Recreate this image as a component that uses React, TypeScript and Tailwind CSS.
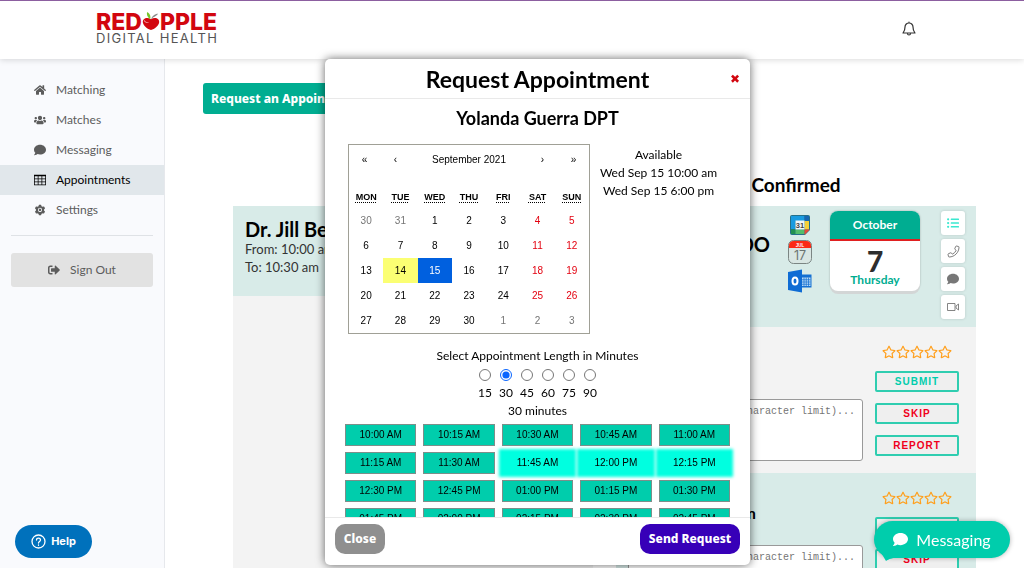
import type { ReactNode } from "react";
import { FaComment, FaHome, FaListUl, FaPhone, FaRegStar, FaSignOutAlt, FaUsers } from "react-icons/fa";
import { AiFillSetting } from "react-icons/ai";
import { ImTable2 } from "react-icons/im";
import { clsx } from "clsx";

const navItems = [
  { label: "Matching", icon: <FaHome /> },
  { label: "Matches", icon: <FaUsers /> },
  { label: "Messaging", icon: <FaComment /> },
  { label: "Appointments", icon: <ImTable2 />, active: true },
  { label: "Settings", icon: <AiFillSetting className="size-[14px]" /> },
];

const weekdays = ["MON", "TUE", "WED", "THU", "FRI", "SAT", "SUN"];

const weeks = [
  [30, 31, 1, 2, 3, 4, 5],
  [6, 7, 8, 9, 10, 11, 12],
  [13, 14, 15, 16, 17, 18, 19],
  [20, 21, 22, 23, 24, 25, 26],
  [27, 28, 29, 30, 1, 2, 3],
];

const lengths = [15, 30, 45, 60, 75, 90];

const slots = [
  "10:00 AM", "10:15 AM", "10:30 AM", "10:45 AM", "11:00 AM",
  "11:15 AM", "11:30 AM", "11:45 AM", "12:00 PM", "12:15 PM",
  "12:30 PM", "12:45 PM", "01:00 PM", "01:15 PM", "01:30 PM",
  "01:45 PM", "02:00 PM", "02:15 PM", "02:30 PM", "02:45 PM",
];
const selectedSlots = ["11:45 AM", "12:00 PM", "12:15 PM"];

function Logo() {
  return (
    <a href="#" className="block w-[124px] font-['Inter']">
      <span className="flex items-end text-[23px] leading-[19px] font-extrabold text-[#d2060f]">
        RED
        <svg viewBox="0 0 20 22" className="mb-px h-[20px] w-[18px] shrink-0">
          <path d="M10 9C6 6 0 8 1 13c1 4 5 7 9 8 4-1 8-4 9-8 1-5-5-7-9-4z" fill="#d2060f" />
          <path d="M2 9c1 3 4 4 6 3-2 2-6 1-6-3z" fill="#fff" opacity=".8" />
          <path d="M9 9C5 6 5 2 6 1c3 2 4 5 3 8z" fill="#77c52c" />
          <path d="M10 9c1-3 4-6 8-6-2 3-5 3-8 6z" fill="#8a8a8a" />
        </svg>
        PPLE
      </span>
      <span className="block text-[13px] leading-[13px] tracking-widest whitespace-nowrap text-[#555]">DIGITAL HEALTH</span>
    </a>
  );
}

function BellIcon() {
  return (
    <svg viewBox="0 0 28 30" className="h-[15px] w-[14px]" fill="none" stroke="#333" strokeWidth="2.400" strokeLinejoin="round" strokeLinecap="round">
      <path d="M14 2v2M14 4c-5 0-8 4-8 8 0 7-2 9-4 12h24c-2-3-4-5-4-12 0-4-3-8-8-8z" />
      <path d="M11 25c0 4 6 4 6 0" />
    </svg>
  );
}

function Header() {
  return (
    <header className="relative z-10 flex h-[59px] shrink-0 items-center justify-between border-t border-[#8c5fa0] bg-white pr-[108px] pb-1 pl-[96px] shadow-[0_1px_6px_rgba(0,0,0,0.15)]">
      <Logo />
      <button type="button" aria-label="Notifications">
        <BellIcon />
      </button>
    </header>
  );
}

function Sidebar() {
  return (
    <aside className="w-[165px] shrink-0 border-r border-[#e6e8ec] bg-[#f9fafd] pt-4 text-[12px] text-[#5c5c5c]">
      <nav>
        {navItems.map((item) => (
          <a
            key={item.label}
            href="#"
            className={clsx("flex h-[30px] items-center gap-[10px] pl-[34px]", item.active && "bg-[#e1e7eb] text-black")}
          >
            <span className="flex w-3 justify-center text-[12px]">{item.icon}</span>
            {item.label}
          </a>
        ))}
      </nav>
      <div className="mx-[11px] mt-[10px] border-t border-[#dfe2e6] pt-[17px]">
        <button type="button" className="flex h-[34px] w-full items-center justify-center gap-[10px] rounded-[3px] bg-[#e2e2e2]">
          <FaSignOutAlt className="text-[12px]" />
          Sign Out
        </button>
      </div>
    </aside>
  );
}

function GoogleCalendarIcon() {
  return (
    <svg viewBox="0 0 40 40" className="size-5">
      <rect width="40" height="40" rx="4" fill="#24708a" />
      <rect x="2" y="2" width="27" height="10" fill="#1a9be0" />
      <rect x="29" y="2" width="9" height="10" fill="#1767b2" />
      <rect x="2" y="12" width="9" height="16" fill="#1a9be0" />
      <rect x="29" y="12" width="9" height="17" fill="#f7d038" />
      <rect x="2" y="29" width="9" height="9" fill="#219150" />
      <rect x="11" y="29" width="18" height="9" fill="#54bd6b" />
      <path d="M29 29h11L29 40z" fill="#e5493a" />
      <path d="M40 30v10H30z" fill="#d7ebe7" />
      <rect x="11" y="11" width="18" height="18" fill="#f4f7f8" />
      <text x="20" y="26" textAnchor="middle" fontSize="15" fontWeight="700" fontFamily="Liberation Sans" fill="#444">31</text>
    </svg>
  );
}

function AppleCalendarIcon() {
  return (
    <svg viewBox="0 0 48 48" className="size-6">
      <rect x="1" y="1" width="46" height="46" rx="10" fill="#d9e6e3" stroke="#7b8583" strokeWidth="2" />
      <path d="M2 16v-5c0-6 4-9 9-9h26c5 0 9 3 9 9v5z" fill="#fb2a15" />
      <text x="24" y="13" textAnchor="middle" fontSize="9" fontWeight="700" fontFamily="Liberation Sans" fill="#fff">JUL</text>
      <text x="24" y="40" textAnchor="middle" fontSize="25" fontFamily="Inter" fill="#6b7472">17</text>
    </svg>
  );
}

function OutlookIcon() {
  return (
    <svg viewBox="0 0 48 48" className="size-6">
      <rect x="25" y="11" width="22" height="26" fill="#1570d2" />
      <path d="M28 17h17v17H28z" fill="#b9dbf5" />
      <path d="M28 21.500h17M28 26h17M28 30.500h17M32 17v17M36.500 17v17M41 17v17" stroke="#1570d2" strokeWidth="1.500" />
      <path d="M0 6 28 1v46L0 42z" fill="#0f6cd4" />
      <ellipse cx="14" cy="24" rx="5" ry="7" fill="none" stroke="#fff" strokeWidth="4" />
    </svg>
  );
}

function VideoIcon() {
  return (
    <svg viewBox="0 0 24 16" className="h-[8px] w-3" fill="none" stroke="#777" strokeWidth="1.800" strokeLinejoin="round">
      <rect x="1" y="1" width="15" height="14" />
      <path d="M18 6l5-4v12l-5-4z" />
    </svg>
  );
}

function ActionButton({ label, children }: { label: string; children: ReactNode }) {
  return (
    <button type="button" aria-label={label} className="flex size-6 items-center justify-center rounded-[3px] bg-white text-[12px] text-[#777] shadow-[0_0_3px_rgba(0,0,0,0.15)]">
      {children}
    </button>
  );
}

function OutlineButton({ children, className }: { children: ReactNode; className: string }) {
  return (
    <button type="button" className={clsx("h-[21px] w-full rounded-[2px] border-2 border-[#2fcdb0] bg-[#efefef] font-['Liberation_Sans'] text-[10px] font-bold tracking-widest", className)}>
      {children}
    </button>
  );
}

function Review({ id, time, className }: { id: string; time?: string; className: string }) {
  return (
    <div className={clsx("flex h-[146px] gap-3 pl-3 pr-[17px]", className)}>
      <div className="flex min-w-0 flex-1 flex-col justify-between pt-[30px] pb-3">
        <p className="w-32 text-right text-[16px] leading-5 font-bold text-black">{time}</p>
        <textarea
          id={id}
          aria-label="Review"
          placeholder="Write review (500 character limit)..."
          className="h-[62px] w-full resize-none overflow-hidden rounded-[3px] border border-[#999] bg-white px-1 py-1 font-['Liberation_Mono'] text-[10px] placeholder:text-[#757575]"
        />
      </div>
      <div className="flex w-[84px] flex-col gap-[11px] pt-[18px]">
        <div className="flex h-[15px] justify-center text-[14px] text-[#ff9f1c]">
          {[1, 2, 3, 4, 5].map((n) => (
            <FaRegStar key={n} />
          ))}
        </div>
        <OutlineButton className="text-[#00cdac]">SUBMIT</OutlineButton>
        <OutlineButton className="text-[#f0001c]">SKIP</OutlineButton>
        <OutlineButton className="text-[#f0001c]">REPORT</OutlineButton>
      </div>
    </div>
  );
}

function DateBadge() {
  return (
    <div className="h-[80px] w-[90px] overflow-hidden rounded-lg bg-white text-center font-bold shadow-[0_3px_0_#d3d6d6,0_0_2px_rgba(0,0,0,0.3)]">
      <div className="h-[28px] bg-[#00ad91] text-[12px] leading-[28px] text-white">October</div>
      <div className="border-t-2 border-[#e02020]" />
      <div className="pt-2 text-[28px] leading-[24px] font-black text-[#2d2d2d]">7</div>
      <div className="text-[12px] leading-[14px] text-[#00ad91]">Thursday</div>
    </div>
  );
}

function Appointments() {
  return (
    <main className="min-w-0 flex-1 overflow-hidden bg-white pt-6 pr-12 pl-[38px]">
      <button type="button" className="h-[31px] rounded-[3px] bg-[#00ad91] px-2 font-['Noto_Sans'] text-[12px] font-extrabold text-white">
        Request an Appointment
      </button>
      <div className="mt-[60px] ml-[30px] grid grid-cols-2 gap-x-[23px]">
        <h2 className="col-start-2 h-8 text-center text-[19px] leading-[22px] font-bold text-black">Confirmed</h2>
        <section className="col-start-1 bg-[#f3f3f3]">
          <div className="h-[90px] bg-[#d8ebe8] px-3 pt-3 text-[13px] leading-[18px] text-[#333]">
            <h3 className="text-[20px] leading-[22px] font-bold text-black">Dr. Jill Bennett</h3>
            <p>From: 10:00 am</p>
            <p>To: 10:30 am</p>
          </div>
        </section>
        <section>
          <div className="flex h-[121px] justify-end bg-[#d8ebe8] pt-[5px] pr-[11px]">
            <h3 className="pt-[21px] text-[20px] leading-[24px] font-bold text-black">DO</h3>
            <div className="ml-[18px] flex w-6 flex-col items-center gap-[5px] pt-1">
              <GoogleCalendarIcon />
              <AppleCalendarIcon />
              <OutlookIcon />
            </div>
            <div className="ml-[18px]">
              <DateBadge />
            </div>
            <div className="ml-[21px] flex flex-col gap-1">
              <ActionButton label="Details">
                <FaListUl className="text-[#3be8d0]" />
              </ActionButton>
              <ActionButton label="Call">
                <FaPhone className="overflow-visible fill-none stroke-[#777] stroke-[44px] text-[11px]" />
              </ActionButton>
              <ActionButton label="Chat">
                <FaComment />
              </ActionButton>
              <ActionButton label="Video">
                <VideoIcon />
              </ActionButton>
            </div>
          </div>
          <Review id="review-1" className="bg-[#f3f3f3]" />
          <Review id="review-2" time="5:00 pm" className="bg-[#d8ebe8]" />
        </section>
      </div>
    </main>
  );
}

function dayClass(week: number, col: number, day: number) {
  const outside = (week === 0 && day > 7) || (week === 4 && day < 7);
  if (outside) return "text-[#757575]";
  if (day === 14) return "bg-[#fbff73]";
  if (day === 15) return "bg-[#0060df] text-white";
  if (col > 4) return "text-[#e3000f]";
  return "";
}

function Calendar() {
  return (
    <div className="w-[242px] border border-[#a0a096] bg-white font-['Liberation_Sans'] text-[10px] text-black">
      <div className="mb-[11px] flex h-[30px] items-center">
        <button type="button" className="w-[31px]">«</button>
        <button type="button" className="w-[31px]">‹</button>
        <button type="button" className="flex-1">September 2021</button>
        <button type="button" className="w-[31px]">›</button>
        <button type="button" className="w-[31px]">»</button>
      </div>
      <table className="w-full table-fixed text-center">
        <thead>
          <tr className="h-[22px]">
            {weekdays.map((d) => (
              <th key={d} className="text-[9px] font-bold underline decoration-dotted underline-offset-2">{d}</th>
            ))}
          </tr>
        </thead>
        <tbody>
          {weeks.map((week, w) => (
            <tr key={w} className="h-[25px]">
              {week.map((day, col) => (
                <td key={col} className={dayClass(w, col, day)}>{day}</td>
              ))}
            </tr>
          ))}
        </tbody>
      </table>
    </div>
  );
}

function RequestDialog() {
  return (
    <div className="pointer-events-none fixed inset-0 z-20 flex justify-center pt-[59px] pb-[3px] pl-[51px]">
      <div role="dialog" aria-label="Request Appointment" className="pointer-events-auto flex w-[425px] flex-col overflow-hidden rounded-[5px] bg-white text-black shadow-[0_0_10px_rgba(0,0,0,0.6)]">
        <div className="relative flex h-10 shrink-0 items-center justify-center border-b border-[#e9e9e9]">
          <h1 className="text-[23px] leading-7 font-bold">Request Appointment</h1>
          <button type="button" aria-label="Dismiss" className="absolute right-[10px] font-['DejaVu_Sans'] text-[12px] leading-4 text-[#d2060f]">✖</button>
        </div>
        <div className="min-h-0 flex-1 overflow-hidden pt-2 text-center text-[12px] leading-[18px]">
          <h2 className="text-[18px] leading-[22px] font-bold">Yolanda Guerra DPT</h2>
          <div className="mt-[15px] flex pr-[23px] pl-[23px]">
            <Calendar />
            <div className="flex-1 pt-[2px] whitespace-nowrap">
              <p>Available</p>
              <p>Wed Sep 15 10:00 am</p>
              <p>Wed Sep 15 6:00 pm</p>
            </div>
          </div>
          <fieldset className="mt-[13px]">
            <legend className="w-full text-center">Select Appointment Length in Minutes</legend>
            <div className="flex justify-center">
              {lengths.map((n) => (
                <label key={n} className="flex w-[21px] flex-col items-center">
                  <span className="flex h-[19px] items-center">
                    <input type="radio" name="length" defaultChecked={n === 30} className="size-3 accent-[#0a66ff]" />
                  </span>
                  {n}
                </label>
              ))}
            </div>
          </fieldset>
          <p>30 minutes</p>
          <div className="mt-1 grid grid-cols-5 gap-x-[7px] gap-y-[6px] px-5 font-['Liberation_Sans'] text-[10px]">
            {slots.map((slot) => (
              <button
                key={slot}
                type="button"
                className={clsx(
                  "h-[22px]",
                  selectedSlots.includes(slot) ? "bg-[#00ffe0] shadow-[0_0_3px_3px_#00ffe0]" : "border border-[#7c8f8a] bg-[#00cdac]",
                )}
              >
                {slot}
              </button>
            ))}
          </div>
        </div>
        <div className="flex h-[48px] shrink-0 items-start justify-between border-t border-[#e9e9e9] px-[10px] pt-[6px] font-['Noto_Sans'] text-[12px] font-extrabold text-white">
          <button type="button" className="h-[30px] w-[50px] rounded-[10px] bg-[#8f8f8f]">Close</button>
          <button type="button" className="h-[30px] w-[100px] rounded-[10px] bg-[#3700b8] whitespace-nowrap">Send Request</button>
        </div>
      </div>
    </div>
  );
}

function FloatingButtons() {
  return (
    <>
      <button type="button" className="fixed bottom-[10px] left-[15px] z-30 flex h-[33px] w-[77px] items-center justify-center gap-[5px] rounded-full bg-[#0071bc] font-['Inter'] text-[11px] font-bold text-white">
        <svg viewBox="0 0 30 30" className="size-[15px]" fill="none" stroke="#fff" strokeWidth="2.600" strokeLinecap="round">
          <circle cx="15" cy="15" r="13" />
          <path d="M11 12c0-5 8-5 8 0 0 3-4 3-4 6M15 22v.5" />
        </svg>
        Help
      </button>
      <button type="button" className="fixed right-[14px] bottom-[10px] z-30 flex h-[37px] w-[136px] items-center justify-center gap-2 rounded-full bg-[#00cdac] text-[16px] text-white shadow-[0_0_5px_rgba(0,0,0,0.3)]">
        <svg viewBox="0 0 24 16" className="absolute top-[25px] left-[2px] h-4 w-6" fill="#00cdac">
          <path d="M1 0l9 15c3-2 6-3 13-4V0z" />
        </svg>
        <FaComment className="relative text-[15px]" />
        <span className="relative">Messaging</span>
      </button>
    </>
  );
}

export default function App() {
  return (
    <div className="flex h-screen flex-col overflow-hidden bg-white font-['Lato',sans-serif]">
      <Header />
      <div className="flex min-h-0 flex-1">
        <Sidebar />
        <Appointments />
      </div>
      <RequestDialog />
      <FloatingButtons />
    </div>
  );
}
